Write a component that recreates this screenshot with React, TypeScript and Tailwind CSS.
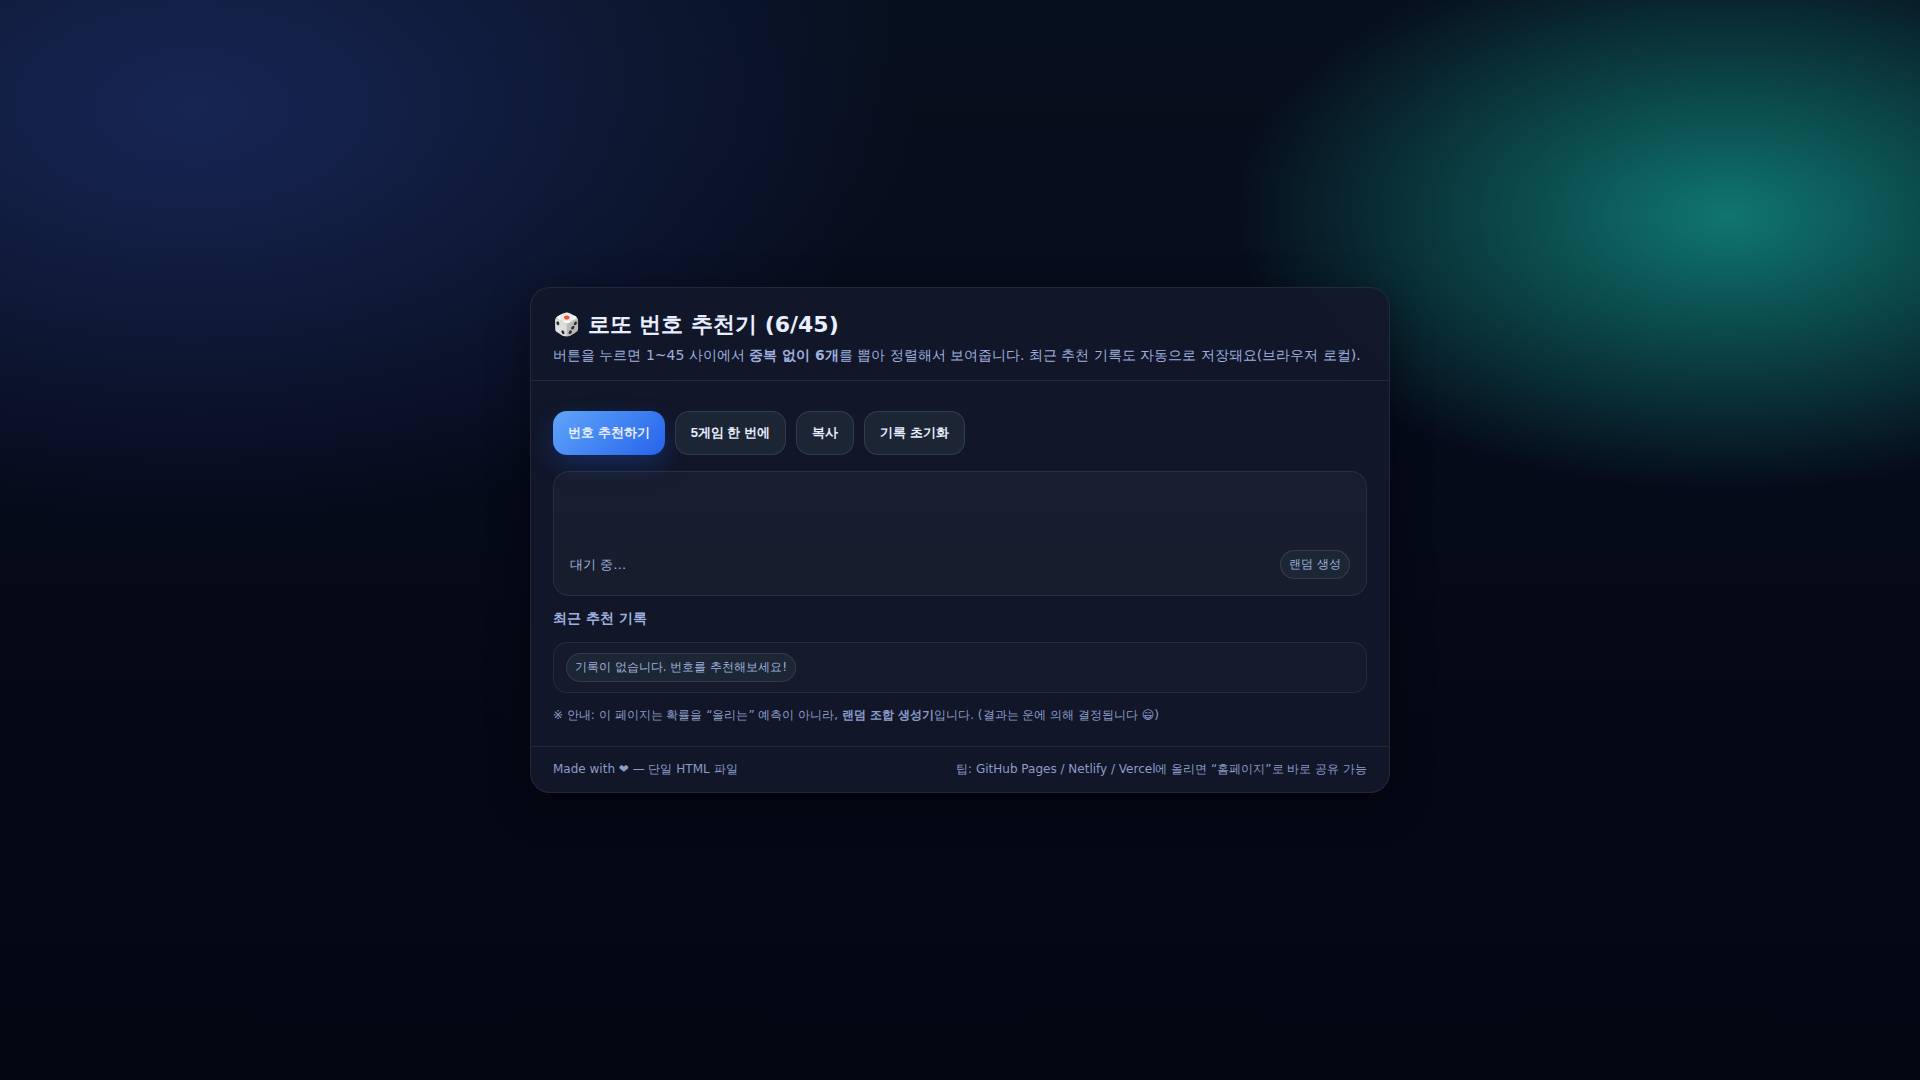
import { useState } from "react";

const SECONDARY_BUTTON =
  "h-11 rounded-[14px] border border-white/10 bg-[#1f2937]/80 px-[15px] font-['Liberation_Sans',sans-serif] text-[13px] font-bold text-[#e8eeff]";
const PRIMARY_BUTTON =
  "h-11 rounded-[14px] bg-[linear-gradient(135deg,#60a5fa,#2563eb)] px-[15px] font-['Liberation_Sans',sans-serif] text-[13px] font-bold text-[#e8eeff] shadow-[0_10px_24px_rgba(37,99,235,0.25)]";
const PILL =
  "inline-flex items-center rounded-full border border-white/10 bg-[#1f2937]/80 px-2 py-[5px] text-xs leading-[17px] text-[#9fb0df]";

function draw(): number[] {
  const picked = new Set<number>();
  while (picked.size < 6) picked.add(1 + Math.floor(Math.random() * 45));
  return [...picked].sort((a, b) => a - b);
}

export default function App() {
  const [games, setGames] = useState<number[][]>([]);
  const [history, setHistory] = useState<number[][]>([]);

  const generate = (count: number) => {
    const next = Array.from({ length: count }, draw);
    setGames(next);
    setHistory((prev) => [...next, ...prev].slice(0, 20));
  };

  const copy = () => {
    navigator.clipboard?.writeText(games.map((g) => g.join(", ")).join("\n"));
  };

  return (
    <div className="flex min-h-screen items-center justify-center bg-[radial-gradient(1200px_700px_at_10%_10%,#172554,transparent_60%),radial-gradient(900px_500px_at_90%_20%,#0f766e,transparent_55%),linear-gradient(180deg,#07101e,#060b1a_40%,#040715_75%,#030712)] p-6 font-['DejaVu_Sans',sans-serif] text-[#e8eeff]">
      <main className="w-full max-w-[860px] overflow-hidden rounded-[20px] border border-white/8 bg-[#12182a]/92 shadow-[0_12px_40px_rgba(0,0,0,0.45)]">
        <header className="border-b border-white/8 px-[22px] pt-[22px] pb-[14px]">
          <h1 className="text-[22px] leading-[30px] font-bold">🎲 로또 번호 추천기 (6/45)</h1>
          <p className="mt-1 text-sm leading-[22px] text-[#9fb0df]">
            버튼을 누르면 1~45 사이에서 <b>중복 없이 6개</b>를 뽑아 정렬해서 보여줍니다. 최근 추천 기록도 자동으로 저장돼요(브라우저 로컬).
          </p>
        </header>

        <div className="px-[22px] pt-[30px] pb-[21px]">
          <div className="flex flex-wrap gap-[10px]">
            <button className={PRIMARY_BUTTON} onClick={() => generate(1)}>번호 추천하기</button>
            <button className={SECONDARY_BUTTON} onClick={() => generate(5)}>5게임 한 번에</button>
            <button className={SECONDARY_BUTTON} onClick={copy}>복사</button>
            <button className={SECONDARY_BUTTON} onClick={() => setHistory([])}>기록 초기화</button>
          </div>

          {/* Result */}
          <section className="mt-4 rounded-2xl border border-white/8 bg-white/3 p-4">
            <div className="flex min-h-[52px] flex-col gap-2">
              {games.map((game, i) => (
                <div key={i} className="flex gap-2">
                  {game.map((n) => (
                    <span key={n} className="flex size-11 items-center justify-center rounded-full bg-blue-500 font-bold">{n}</span>
                  ))}
                </div>
              ))}
            </div>
            <div className="mt-[10px] flex items-center justify-between">
              <span className="text-[13px] leading-5 text-[#9fb0df]">{games.length ? "생성 완료" : "대기 중…"}</span>
              <span className={PILL}>랜덤 생성</span>
            </div>
          </section>

          {/* History */}
          <h2 className="mt-3 text-sm leading-5 font-bold text-[#9fb0df]">최근 추천 기록</h2>
          <div className="mt-[14px] flex flex-wrap gap-2 rounded-[14px] border border-white/8 bg-white/2 px-3 py-[10px]">
            {history.length === 0 ? (
              <span className={PILL}>기록이 없습니다. 번호를 추천해보세요!</span>
            ) : (
              history.map((game, i) => <span key={i} className={PILL}>{game.join(", ")}</span>)
            )}
          </div>
          <p className="mt-3 text-xs leading-5 text-[#8c9bc8]">
            ※ 안내: 이 페이지는 확률을 “올리는” 예측이 아니라, <b>랜덤 조합 생성기</b>입니다. (결과는 운에 의해 결정됩니다 😄)
          </p>
        </div>

        <footer className="flex flex-wrap justify-between gap-2 border-t border-white/8 px-[22px] py-[13px] text-xs leading-[19px] text-[#8c9bc8]">
          <span>Made with ❤ — 단일 HTML 파일</span>
          <span>팁: GitHub Pages / Netlify / Vercel에 올리면 “홈페이지”로 바로 공유 가능</span>
        </footer>
      </main>
    </div>
  );
}
